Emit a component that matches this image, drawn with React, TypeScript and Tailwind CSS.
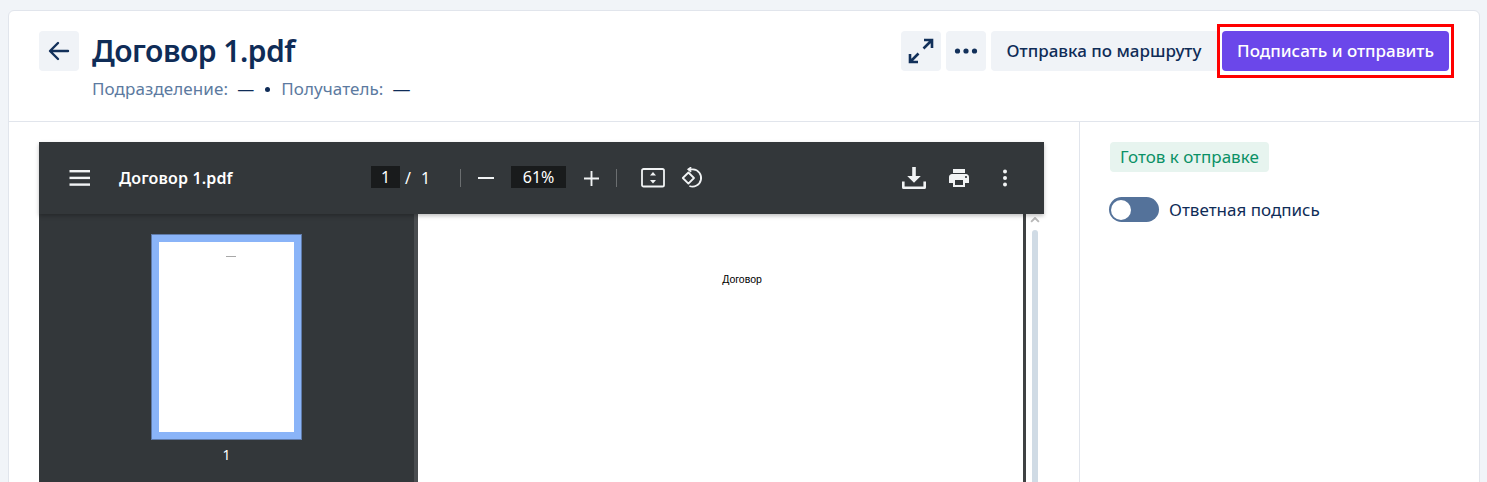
function Hamburger() {
  return (
    <svg width="22" height="16" viewBox="0 0 22 16" fill="#f1f3f4">
      <rect x="0.5" y="0" width="20.5" height="2.4" />
      <rect x="0.5" y="6.7" width="20.5" height="2.4" />
      <rect x="0.5" y="13.4" width="20.5" height="2.4" />
    </svg>
  );
}

function FitIcon() {
  return (
    <svg width="24" height="20" viewBox="0 0 24 20" fill="none">
      <rect x="1" y="1" width="22" height="17.5" rx="1.6" stroke="#f1f3f4" strokeWidth="1.8" />
      <path d="M12 4l3 3.4H9zM12 15.5l-3-3.4h6z" fill="#f1f3f4" />
    </svg>
  );
}

function RotateIcon() {
  return (
    <svg width="24" height="22" viewBox="0 0 24 22" fill="none" stroke="#f1f3f4" strokeWidth="1.8">
      <path d="M8.4 5.5L14 11l-5.6 5.6L2.8 11z" strokeLinejoin="round" />
      <path d="M8.6 2.4H13a8.6 8.6 0 1 1-3.6 16.6" />
      <path d="M11.2 0.3L8.4 2.4l2.8 2.3" />
    </svg>
  );
}

function DownloadIcon() {
  return (
    <svg width="26" height="24" viewBox="0 0 26 24" fill="#f1f3f4">
      <path d="M11.2 1h3.6v9h5l-6.8 6.8L6.2 10h5z" />
      <path d="M1 15.5h2.6V20.6h18.8V15.5H25V21.4A1.6 1.6 0 0 1 23.4 23H2.6A1.6 1.6 0 0 1 1 21.4z" />
    </svg>
  );
}

function PrintIcon() {
  return (
    <svg width="24" height="24" viewBox="0 0 24 24" fill="#f1f3f4">
      <path d="M19 8H5c-1.66 0-3 1.34-3 3v6h4v4h12v-4h4v-6c0-1.66-1.34-3-3-3zm-3 11H8v-5h8v5zm3-7c-.55 0-1-.45-1-1s.45-1 1-1 1 .45 1 1-.45 1-1 1zm-1-9H6v4h12V3z" />
    </svg>
  );
}

function DotsVertical() {
  return (
    <svg width="6" height="18" viewBox="0 0 6 18" fill="#f1f3f4">
      <circle cx="3" cy="2.5" r="2" />
      <circle cx="3" cy="9" r="2" />
      <circle cx="3" cy="15.5" r="2" />
    </svg>
  );
}

function BackIcon() {
  return (
    <svg width="22" height="20" viewBox="0 0 22 20" fill="none" stroke="#12305a" strokeWidth="2.4" strokeLinecap="round" strokeLinejoin="round">
      <path d="M20 10H2.5M10 2L2 10l8 8" />
    </svg>
  );
}

function ExpandIcon() {
  return (
    <svg width="26" height="26" viewBox="0 0 26 26" fill="none" stroke="#12305a" strokeWidth="2.6">
      <path d="M16 2h8v8M24 2l-8.5 8.5M10 24H2v-8M2 24l8.5-8.5" />
    </svg>
  );
}

export default function App() {
  return (
    <div className="h-[482px] overflow-hidden bg-[#f1f4f8] pl-2 pr-[7px] pt-[10px] font-['Noto_Sans',sans-serif]">
      <div className="h-[480px] rounded-t-md border border-[#e1e5ec] bg-white">
        <header className="flex h-[111px] justify-between border-b border-[#e1e5ec] pl-[30px] pr-[25px] pt-5">
          <div className="flex items-start">
            <button className="flex h-10 w-10 items-center justify-center rounded bg-[#f0f3f7]">
              <BackIcon />
            </button>
            <div className="ml-[13px]">
              <h1 className="h-10 text-[30px] font-semibold leading-10 tracking-[-0.5px] text-[#0f2c57]">Договор 1.pdf</h1>
              <div className="mt-[6px] flex items-center text-[17px] leading-6 tracking-[0.1px] text-[#5c7aa0]">
                <span>Подразделение:</span>
                <span className="ml-[9px] w-[17px] text-[#0f2c57]">—</span>
                <span className="ml-[11px] mr-[11px] h-[5px] w-[5px] rounded-full bg-[#0f2c57]" />
                <span>Получатель:</span>
                <span className="ml-[9px] text-[18px] text-[#0f2c57]">—</span>
              </div>
            </div>
          </div>
          <div className="flex items-start">
            <button className="flex h-10 w-10 items-center justify-center rounded bg-[#f0f3f7]">
              <ExpandIcon />
            </button>
            <button className="ml-[5px] flex h-10 w-10 items-center justify-center rounded bg-[#f0f3f7]">
              <svg width="24" height="6" viewBox="0 0 24 6" fill="#12305a">
                <circle cx="3.5" cy="3" r="2.6" />
                <circle cx="12" cy="3" r="2.6" />
                <circle cx="20.5" cy="3" r="2.6" />
              </svg>
            </button>
            <button className="ml-[5px] h-10 w-[226px] rounded-l bg-[#f0f3f7] text-center text-[17px] font-medium text-[#0f2c57]">
              Отправка по маршруту
            </button>
            <div className="-mt-[7px] border-[3px] border-[#ff0000] px-[2px] py-[4px]">
              <button className="block h-10 w-[227px] rounded bg-[#6b47ea] text-center text-[17px] font-medium text-white">
                Подписать и отправить
              </button>
            </div>
          </div>
        </header>

        <div className="flex h-[360px]">
          <main className="w-[1070px] shrink-0 pl-[30px] pr-[35px] pt-5">
            <div className="relative z-10 flex h-[72px] items-center bg-[#33373a] pl-[30px] pr-[36px] text-white shadow-[0_2px_4px_rgba(0,0,0,0.25)]">
              <Hamburger />
              <span className="ml-[28px] w-[252px] text-[16px] font-semibold tracking-[0.15px]">Договор 1.pdf</span>
              <span className="mb-[2px] flex h-[22px] w-[29px] items-center justify-center bg-[#191b1c] text-[16px]">1</span>
              <span className="ml-[5px] text-[16px]">/</span>
              <span className="ml-[10px] text-[16px]">1</span>
              <span className="ml-[30px] h-[18px] w-px bg-[#6b6e70]" />
              <span className="ml-[17px] h-[2px] w-[16px] bg-[#f1f3f4]" />
              <span className="mb-[2px] ml-[17px] flex h-[22px] w-[55px] items-center justify-center bg-[#191b1c] text-[16px]">61%</span>
              <svg className="ml-[18px]" width="15" height="15" viewBox="0 0 16 16" fill="#f1f3f4">
                <path d="M7 0h2v7h7v2H9v7H7V9H0V7h7z" />
              </svg>
              <span className="ml-[17px] h-[18px] w-px bg-[#6b6e70]" />
              <span className="ml-[24px] flex"><FitIcon /></span>
              <span className="ml-[15px] flex"><RotateIcon /></span>
              <span className="ml-auto flex"><DownloadIcon /></span>
              <span className="ml-[20px] flex"><PrintIcon /></span>
              <span className="ml-[31px] flex"><DotsVertical /></span>
            </div>
            <div className="flex h-[268px] bg-[#33373a]">
              <aside className="flex w-[375px] shrink-0 flex-col pl-[112px] pt-[20px]">
                <div className="h-[206px] w-[151px] border border-[#5f7aa8] bg-[#8ab4f8] p-[7px]">
                  <div className="flex h-[190px] w-[135px] justify-center bg-white pt-[14px]">
                    <span className="ml-[9px] h-px w-[10px] bg-[#a8a8a8]" />
                  </div>
                </div>
                <span className="mt-[5px] w-[151px] text-center text-[14px] leading-5 text-white">1</span>
              </aside>
              <div className="w-[4px] shrink-0 bg-[#4a4d50]" />
              <div className="flex w-[605px] shrink-0 justify-center bg-white pt-[57px]">
                <span className="ml-[43px] font-['Liberation_Sans',sans-serif] text-[10.5px] leading-[16px] text-black">Договор</span>
              </div>
              <div className="w-[3px] shrink-0 bg-[#3f4143]" />
              <div className="flex flex-1 flex-col items-center bg-white pr-[1px] pt-[3px]">
                <svg width="10" height="6" viewBox="0 0 10 6" fill="none" stroke="#b9b9b9" strokeWidth="2">
                  <path d="M1 5l4-4 4 4" />
                </svg>
                <div className="mt-[7px] h-[260px] w-[6px] rounded-t-full bg-[#d0dbe5]" />
              </div>
            </div>
          </main>
          <aside className="flex-1 border-l border-[#e1e5ec] pl-[29px] pt-5">
            <span className="ml-px inline-block h-[30px] w-[159px] rounded bg-[#e7f4ef] pl-[10px] text-[17px] leading-[30px] text-[#0b9166]">Готов к отправке</span>
            <div className="mt-[25px] flex items-center">
              <span className="flex h-[25px] w-[50px] items-center rounded-full bg-[#54729a] pl-[2px]">
                <span className="h-[20px] w-[20px] rounded-full bg-white" />
              </span>
              <span className="ml-[10px] text-[17px] text-[#0f2c57]">Ответная подпись</span>
            </div>
          </aside>
        </div>
      </div>
    </div>
  );
}
